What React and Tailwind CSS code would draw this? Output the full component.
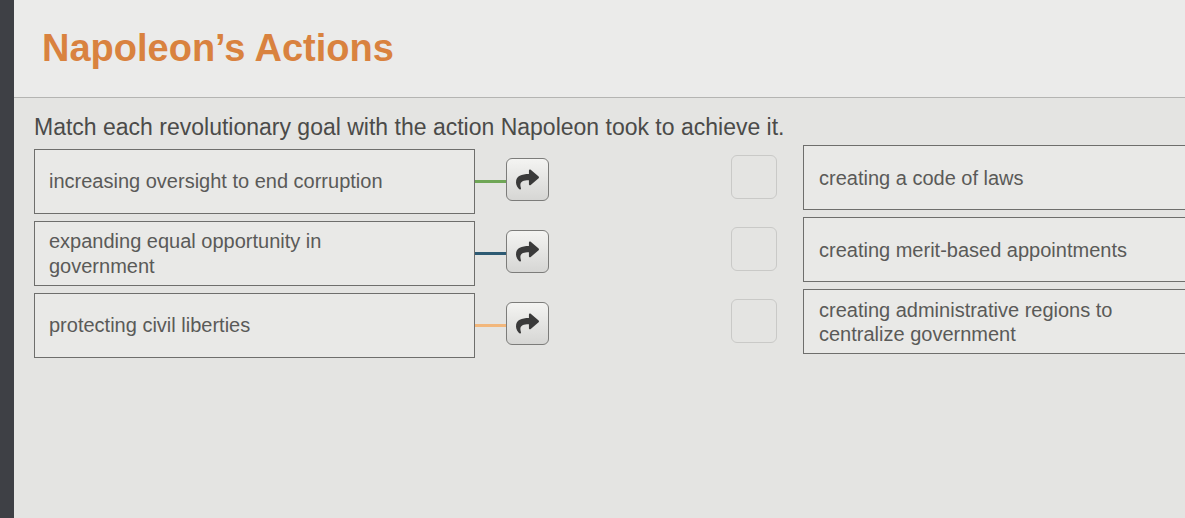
import { FaShare } from "react-icons/fa";

const goals = [
  { text: "increasing oversight to end corruption", line: "bg-[#6fa656]" },
  { text: "expanding equal opportunity in government", line: "bg-[#2d5a73]" },
  { text: "protecting civil liberties", line: "bg-[#f2b77c]" },
];

const actions = [
  "creating a code of laws",
  "creating merit-based appointments",
  "creating administrative regions to centralize government",
];

function GoalRow({ goal }) {
  return (
    <div className="flex items-center">
      <div className="flex h-[65px] w-[441px] items-center border border-[#6e6e6c] bg-[#e9e9e7] pl-[14px] pr-[60px] text-[20px] leading-[25px] text-[#5a5a58]">
        {goal.text}
      </div>
      <div className={`h-[3px] w-[31px] ${goal.line}`}></div>
      <button className="mb-[5px] flex h-[43px] w-[43px] items-center justify-center rounded-md border border-[#7c7c7a] bg-gradient-to-b from-[#f4f4f2] to-[#d6d6d4] text-[#3a3a3a]">
        <FaShare size={23} />
      </button>
    </div>
  );
}

function ActionRow({ text }) {
  return (
    <div className="flex items-center">
      <div className="mb-[2px] h-[44px] w-[46px] rounded-md border border-[#c9c9c7]"></div>
      <div className="ml-[26px] flex h-[65px] flex-1 items-center border border-[#6e6e6c] border-r-0 bg-[#e9e9e7] pl-[15px] pr-[40px] text-[20px] leading-[24px] text-[#5a5a58]">
        {text}
      </div>
    </div>
  );
}

export default function App() {
  return (
    <div className="flex h-[518px] w-full overflow-hidden bg-[#e4e4e2] font-['Liberation_Sans',Arial,sans-serif]">
      <div className="w-[14px] shrink-0 bg-[#3e4045]"></div>
      <div className="flex flex-1 flex-col">
        <div className="h-[98px] border-b border-[#b4b4b2] bg-[#ebebea] pl-[28px] pt-[26px]">
          <h1 className="text-[38px] font-bold leading-[44px] text-[#d9823f]">Napoleon’s Actions</h1>
        </div>
        <div className="pl-[20px] pt-[15px]">
          <p className="text-[23px] leading-[29px] text-[#4b4b49]">
            Match each revolutionary goal with the action Napoleon took to achieve it.
          </p>
          <div className="flex">
            <div className="mt-[7px] flex flex-col gap-[7px]">
              {goals.map((g) => (
                <GoalRow key={g.text} goal={g} />
              ))}
            </div>
            <div className="ml-[182px] mt-[3px] flex flex-1 flex-col gap-[7px]">
              {actions.map((a) => (
                <ActionRow key={a} text={a} />
              ))}
            </div>
          </div>
        </div>
      </div>
    </div>
  );
}
